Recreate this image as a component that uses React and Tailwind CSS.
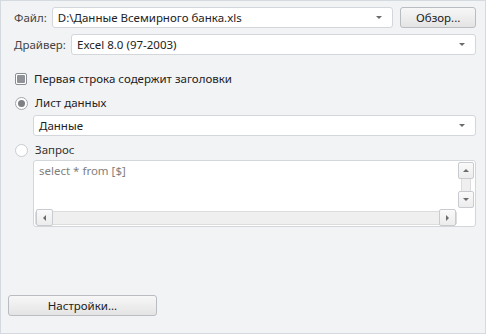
import React from "react";

const Arrow = ({ up, left, right }) => {
  let pts = "0,0 6,0 3,3";
  let w = 6, h = 3;
  if (up) pts = "0,3 6,3 3,0";
  if (left) { pts = "3,0 3,6 0,3"; w = 3; h = 6; }
  if (right) { pts = "0,0 0,6 3,3"; w = 3; h = 6; }
  return (
    <svg width={w} height={h} viewBox={`0 0 ${w} ${h}`}>
      <polygon points={pts} fill="#6b6b6b" />
    </svg>
  );
};

const Combo = ({ text, className }) => (
  <div className={`flex items-center h-[21px] bg-white border border-[#d3d7dc] rounded-[3px] pl-[5px] pr-[10px] ${className}`}>
    <span className="flex-1 text-[11.5px] leading-[16px] text-[#222]">{text}</span>
    <Arrow />
  </div>
);

const Btn = ({ children, className }) => (
  <div className={`flex items-center justify-center h-[21px] border border-[#b9bcc0] rounded-[3px] bg-gradient-to-b from-[#f7f7f7] to-[#e4e4e4] text-[11.5px] leading-[16px] text-[#222] ${className}`}>
    {children}
  </div>
);

const SBtn = ({ children, className }) => (
  <div className={`flex items-center justify-center w-[16px] h-[17px] border border-[#c8cbcf] rounded-[2px] bg-gradient-to-b from-[#fafafa] to-[#ececec] ${className}`}>
    {children}
  </div>
);

export default function App() {
  return (
    <div
      className="w-[486px] h-[334px] bg-[#f2f3f5] border border-[#d5dae0] relative"
      style={{ fontFamily: '"Segoe UI", "Noto Sans", "Open Sans", sans-serif' }}
    >
      <div className="flex items-center pt-[6px] pl-[13px] pr-[9px]">
        <span className="text-[11.5px] leading-[16px] text-[#444] w-[38px]">Файл:</span>
        <Combo text="D:\Данные Всемирного банка.xls" className="w-[343px]" />
        <Btn className="ml-[7px] w-[76px]">Обзор...</Btn>
      </div>
      <div className="flex items-center mt-[6px] pl-[13px] pr-[9px]">
        <span className="text-[11.5px] leading-[16px] text-[#444] w-[57px]">Драйвер:</span>
        <Combo text="Excel 8.0 (97-2003)" className="flex-1 h-[20px]" />
      </div>

      <div className="flex items-center h-[16px] mt-[16px] pl-[14px]">
        <div className="w-[12px] h-[12px] border border-[#8a8d91] rounded-[2px] bg-white flex items-center justify-center">
          <div className="w-[8px] h-[8px] bg-[#8f9296] rounded-[1px]" />
        </div>
        <span className="ml-[7px] text-[11.5px] leading-[16px] text-[#222]">Первая строка содержит заголовки</span>
      </div>

      <div className="flex items-center h-[16px] mt-[8px] pl-[14px]">
        <div className="w-[13px] h-[13px] rounded-full border border-[#a4a7ab] bg-white flex items-center justify-center">
          <div className="w-[7px] h-[7px] rounded-full bg-[#7d8084]" />
        </div>
        <span className="ml-[7px] text-[11.5px] leading-[16px] text-[#222]">Лист данных</span>
      </div>
      <div className="pl-[32px] pr-[9px] mt-[4px]">
        <Combo text="Данные" className="h-[20px]" />
      </div>

      <div className="flex items-center h-[16px] mt-[6px] pl-[14px]">
        <div className="w-[13px] h-[13px] rounded-full border border-[#c9ccd0] bg-white" />
        <span className="ml-[7px] text-[11.5px] leading-[16px] text-[#333]">Запрос</span>
      </div>

      <div className="ml-[32px] mr-[9px] mt-[2px] h-[67px] bg-white border border-[#d3d7dc] rounded-[3px] flex flex-col">
        <div className="flex flex-1">
          <div className="flex-1 pl-[5px] pt-[2px] text-[11.5px] leading-[16px] text-[#808080]">select * from [$]</div>
          <div className="w-[18px] flex flex-col items-center pt-[1px]">
            <SBtn><Arrow up /></SBtn>
            <div className="w-[10px] h-[12px] bg-[#efefef] border-x border-[#dcdcdc]" />
            <SBtn><Arrow /></SBtn>
          </div>
        </div>
        <div className="flex items-center h-[15px] mb-[1px] pl-[1px] pr-[18px]">
          <div className="flex-1 h-[14px] bg-[#efefef] border border-[#dcdcdc] rounded-[2px] flex items-center justify-between">
            <SBtn className="h-[14px] w-[17px]"><Arrow left /></SBtn>
            <SBtn className="h-[14px] w-[17px]"><Arrow right /></SBtn>
          </div>
        </div>
      </div>

      <div className="absolute left-[7px] top-[294px]">
        <Btn className="w-[149px] h-[21px]">Настройки...</Btn>
      </div>
    </div>
  );
}
